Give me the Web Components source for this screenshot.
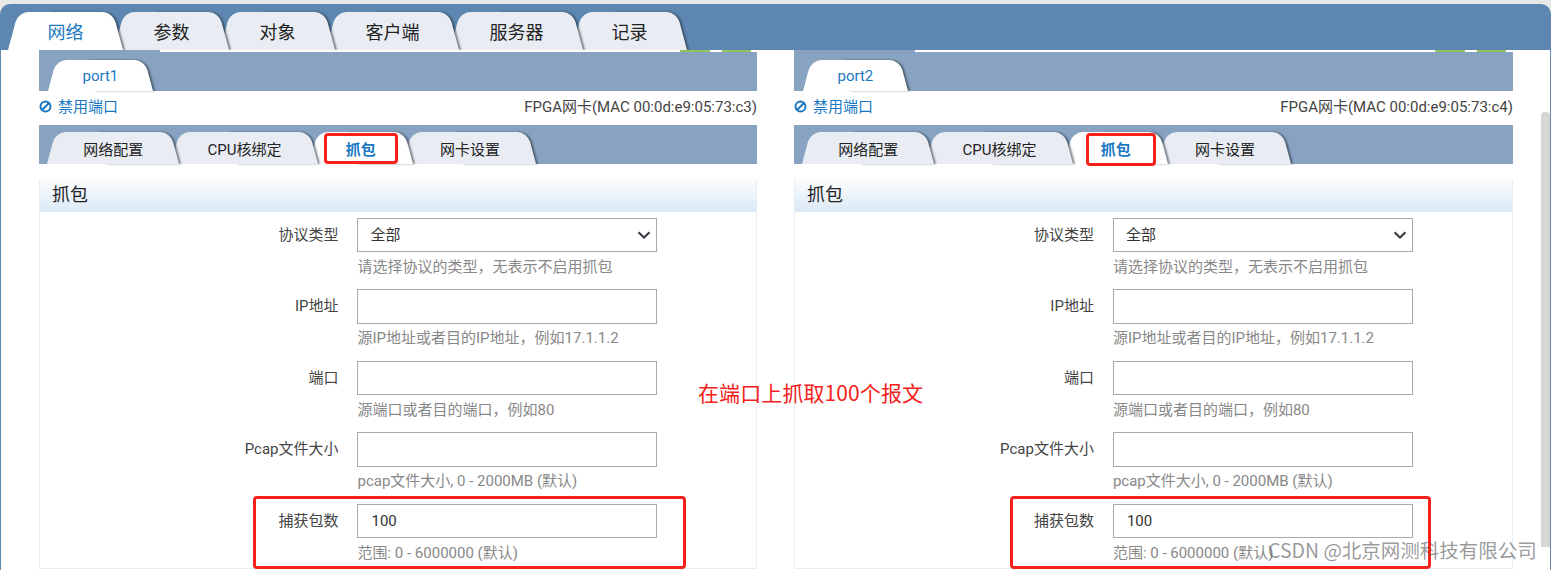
<!DOCTYPE html>
<html lang="zh-CN">
<head>
<meta charset="utf-8">
<title>抓包</title>
<style>
    html, body { margin: 0; height: 570px; overflow: hidden; background: #fff; }
    body { font-family: Roboto, "Noto Sans CJK SC", sans-serif; }
</style>
</head>
<body>
<script>
// Shell: grey top line, blue tab bar, content area and scrollbar
class AppShell extends HTMLElement {
    constructor() {
        super();
        this.attachShadow({ mode: 'open' }).innerHTML = `
            <style>
                :host { display: block; position: relative; height: 570px; background: #e8e8e8; padding-top: 4px; box-sizing: border-box; overflow: hidden; }
                .bar { border-radius: 10px 10px 0 0; overflow: hidden; }
                .body { display: flex; height: 520px; background: #fff; border-left: 1px solid #5d87b0; border-right: 1px solid #5d87b0; }
                .content { flex: 1; display: grid; grid-template-columns: 718px 719px; column-gap: 37px; padding-left: 38px; align-items: start; }
                .scroll { width: 9px; padding-top: 62px; box-sizing: border-box; }
                .thumb { height: 435px; background: #d6d6d6; border-radius: 4px 4px 0 0; }
            </style>
            <div class="bar"><slot name="tabs"></slot></div>
            <div class="body">
                <div class="content"><slot></slot></div>
                <div class="scroll"><div class="thumb"></div></div>
            </div>
            <slot name="overlay"></slot>
        `;
    }
}
customElements.define('app-shell', AppShell);

// Row of tabs on a coloured band
class TabBar extends HTMLElement {
    constructor() {
        super();
        this.attachShadow({ mode: 'open' }).innerHTML = `
            <style>
                :host { display: flex; align-items: flex-end; box-sizing: border-box; }
                :host([kind="main"]) {
                    background: #5d87b0; height: 46px; padding-left: 8px;
                    --tab-h: 38px; --tab-pad: 39.5px; --tab-overlap: -9px; --tab-size: 18px; --tab-weight: 400; --tab-shift: 0px;
                }
                :host([kind="port"]) {
                    background: #87a3c1; height: 39px; padding-left: 9px;
                    --tab-h: 31px; --tab-pad: 34.5px; --tab-overlap: -9px; --tab-size: 15px; --tab-weight: 400; --tab-shift: 0px;
                }
                :host([kind="sub"]) {
                    background: #87a3c1; height: 39px; padding-left: 7.75px;
                    --tab-h: 32px; --tab-pad: 36.5px; --tab-overlap: -8.75px; --tab-size: 15px; --tab-weight: 400; --tab-active-weight: 700; --tab-shift: 0px;
                }
            </style>
            <slot></slot>
        `;
    }
}
customElements.define('tab-bar', TabBar);

class TabItem extends HTMLElement {
    constructor() {
        super();
        this.attachShadow({ mode: 'open' }).innerHTML = `
            <style>
                :host {
                    display: flex; align-items: center; justify-content: center; position: relative;
                    height: var(--tab-h); padding: 0 var(--tab-pad); margin-right: var(--tab-overlap);
                    font-size: var(--tab-size); font-weight: var(--tab-weight); color: #222; white-space: nowrap;
                    --fill: #e9edf3;
                }
                :host([active]) { --fill: #fff; color: #1a78c2; font-weight: var(--tab-active-weight, 400); }
                .l, .r { position: absolute; top: 0; bottom: 0; width: 56%; background: var(--fill); transform-origin: bottom; }
                .l { left: 0; transform: skewX(-15deg); border-radius: 10px 0 0 0; }
                .r { right: 0; transform: skewX(15deg); border-radius: 0 10px 0 0; box-shadow: 2px 0 2px rgba(30, 40, 50, .55); }
                .t { position: relative; top: var(--tab-shift); }
            </style>
            <div class="r"></div><div class="l"></div>
            <span class="t"><slot></slot></span>
        `;
    }

    connectedCallback() {
        // earlier tabs lie over later ones
        let index = 0;
        for (let el = this.previousElementSibling; el; el = el.previousElementSibling) index++;
        this.style.zIndex = 20 - index;
    }
}
customElements.define('tab-item', TabItem);

// One form line: label, control, hint
class FormRow extends HTMLElement {
    constructor() {
        super();
        this.attachShadow({ mode: 'open' });
    }

    connectedCallback() {
        const label = this.getAttribute('label') || '';
        const hint = this.getAttribute('hint') || '';
        const value = this.getAttribute('value') || '';
        const control = this.hasAttribute('select')
            ? `<select><option>${value}</option></select>`
            : `<input type="text" value="${value}">`;
        this.shadowRoot.innerHTML = `
            <style>
                :host { display: grid; grid-template-columns: calc(41.8% - .8px) 300px; column-gap: 19px; height: 71.5px; font-size: 15px; color: #444; }
                label { line-height: 34px; text-align: right; white-space: nowrap; }
                input, select {
                    display: block; box-sizing: border-box; width: 300px; height: 34.5px; margin: 0; padding: 0 13px; background: #fff;
                    border: 1px solid #aaa; border-radius: 0; outline: none; font: inherit; color: #333;
                }
                select {
                    appearance: none; padding: 0 12px;
                    background: #fff url("data:image/svg+xml,%3Csvg xmlns='http://www.w3.org/2000/svg' width='14' height='8' viewBox='0 0 14 8'%3E%3Cpath d='M1.5 1.2 L7 6.5 L12.5 1.2' fill='none' stroke='%23343a40' stroke-width='2'/%3E%3C/svg%3E") no-repeat right 5px center;
                }
                .hint { grid-column: 2; padding-top: 3.5px; line-height: 22px; font-size: 15px; color: #888; white-space: nowrap; }
            </style>
            <label>${label}</label>
            <div>${control}<div class="hint">${hint}</div></div>
        `;
    }
}
customElements.define('form-row', FormRow);

// Port column: port tab, info line, sub tabs and the capture form
class PortPanel extends HTMLElement {
    constructor() {
        super();
        this.attachShadow({ mode: 'open' });
    }

    connectedCallback() {
        const port = this.getAttribute('port');
        const mac = this.getAttribute('mac');
        this.shadowRoot.innerHTML = `
            <style>
                :host { display: block; }
                .strip {
                    height: 2px;
                    background:
                        linear-gradient(to right, #87a3c1 121px, transparent 121px),
                        linear-gradient(to right, transparent 641px, #8fc25a 641px, #8fc25a 671px, transparent 671px, transparent 683px, #8fc25a 683px, #8fc25a 712px, transparent 712px);
                }
                .info { display: flex; justify-content: space-between; align-items: center; box-sizing: border-box; height: 34px; padding-bottom: 5px; font-size: 15px; color: #444; white-space: nowrap; }
                .off { display: flex; align-items: center; gap: 6px; color: #1a78c2; }
                .off svg { display: block; position: relative; top: 1px; }
                .box { margin-top: 15px; border-left: 1px solid #e3edf6; border-right: 1px solid #e3edf6; border-bottom: 1px solid #e3edf6; height: 390px; box-sizing: border-box; }
                .head {
                    height: 33px; line-height: 31px; padding-left: 12px; font-size: 18px; color: #222;
                    background: linear-gradient(#fbfdfe, #dbe9f6);
                }
                .rows { padding-top: 5.7px; }
            </style>
            <div class="strip"></div>
            <tab-bar kind="port"><tab-item active>${port}</tab-item></tab-bar>
            <div class="info">
                <span class="off">
                    <svg width="13" height="13" viewBox="0 0 13 13" fill="none" stroke="#1a78c2" stroke-width="2">
                        <circle cx="6.5" cy="6.5" r="5"/><path d="M3 10 L10 3"/>
                    </svg>
                    禁用端口
                </span>
                <span>FPGA网卡(MAC ${mac})</span>
            </div>
            <tab-bar kind="sub">
                <tab-item>网络配置</tab-item>
                <tab-item>CPU核绑定</tab-item>
                <tab-item active>抓包</tab-item>
                <tab-item>网卡设置</tab-item>
            </tab-bar>
            <div class="box">
                <div class="head">抓包</div>
                <div class="rows">
                    <form-row select label="协议类型" value="全部" hint="请选择协议的类型，无表示不启用抓包"></form-row>
                    <form-row label="IP地址" hint="源IP地址或者目的IP地址，例如17.1.1.2"></form-row>
                    <form-row label="端口" hint="源端口或者目的端口，例如80"></form-row>
                    <form-row label="Pcap文件大小" hint="pcap文件大小, 0 - 2000MB (默认)"></form-row>
                    <form-row label="捕获包数" value="100" hint="范围: 0 - 6000000 (默认)"></form-row>
                </div>
            </div>
        `;
    }
}
customElements.define('port-panel', PortPanel);

// Red marks drawn over the screenshot
class MarkBox extends HTMLElement {
    constructor() {
        super();
        this.attachShadow({ mode: 'open' }).innerHTML = `
            <style>
                :host { display: block; position: absolute; box-sizing: border-box; border: 3px solid #f5211a; border-radius: 4px; pointer-events: none; z-index: 50; }
            </style>
        `;
    }
}
customElements.define('mark-box', MarkBox);

class MarkText extends HTMLElement {
    constructor() {
        super();
        this.attachShadow({ mode: 'open' }).innerHTML = `
            <style>
                :host { display: block; position: absolute; white-space: nowrap; z-index: 60; font-family: "Noto Sans CJK SC", sans-serif; }
            </style>
            <slot></slot>
        `;
    }
}
customElements.define('mark-text', MarkText);
</script>

<app-shell>
    <tab-bar slot="tabs" kind="main">
        <tab-item active>网络</tab-item>
        <tab-item>参数</tab-item>
        <tab-item>对象</tab-item>
        <tab-item>客户端</tab-item>
        <tab-item style="margin-right:-11px">服务器</tab-item>
        <tab-item>记录</tab-item>
    </tab-bar>
    <port-panel port="port1" mac="00:0d:e9:05:73:c3"></port-panel>
    <port-panel port="port2" mac="00:0d:e9:05:73:c4"></port-panel>
    <mark-box slot="overlay" style="left:324px;top:133px;width:74px;height:31px"></mark-box>
    <mark-box slot="overlay" style="left:1086px;top:133px;width:70px;height:33px"></mark-box>
    <mark-box slot="overlay" style="left:253px;top:496px;width:433px;height:73px"></mark-box>
    <mark-box slot="overlay" style="left:1010px;top:496px;width:421px;height:73px"></mark-box>
    <mark-text slot="overlay" style="left:698px;top:377px;font-size:21px;letter-spacing:.1px;line-height:30px;color:#f5211a">在端口上抓取100个报文</mark-text>
    <mark-text slot="overlay" style="left:1268px;top:535px;font-size:19.5px;line-height:30px;color:rgba(95,95,95,.65)">CSDN @北京网测科技有限公司</mark-text>
</app-shell>
</body>
</html>
